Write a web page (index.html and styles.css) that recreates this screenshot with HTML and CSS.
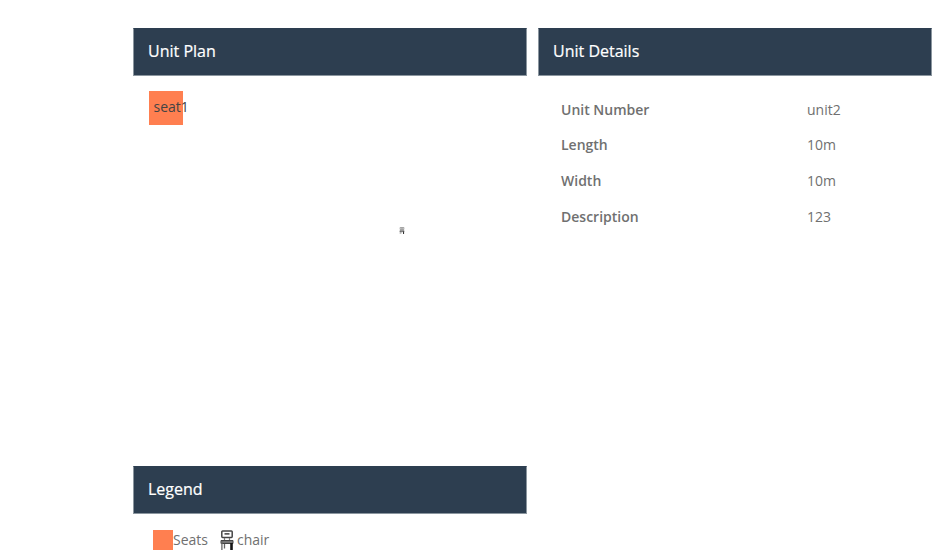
FILE: index.html
```html
<!DOCTYPE html>
<html lang="en">
<head>
<meta charset="utf-8">
<title>Unit Plan</title>
<link rel="stylesheet" href="styles.css">
</head>
<body>
<svg class="defs" width="0" height="0" aria-hidden="true">
  <symbol id="chair" viewBox="0 0 14 20">
    <rect x="1.8" y="1" width="10.4" height="6.4" rx=".8" fill="#fff" stroke="#454545" stroke-width="1.5"/>
    <path d="M4.5 3.9h5" stroke="#222" stroke-width="1.3"/>
    <path d="M4.5 8v3M9.5 8v3" stroke="#777" stroke-width="1.2"/>
    <path d="M1 10.5h12v3H1z" fill="#777" stroke="#444" stroke-width="1"/>
    <path d="M1.9 11v9M4.5 14v4.5" stroke="#666" stroke-width="1.3"/>
    <path d="M11.5 13v7" stroke="#151515" stroke-width="2.6"/>
  </symbol>
</svg>
<main class="page">
  <div class="column">
    <section class="panel plan">
      <h2 class="title">Unit Plan</h2>
      <div class="canvas">
        <div class="seat">seat1</div>
        <svg class="item"><use href="#chair"/></svg>
      </div>
    </section>
    <section class="panel">
      <h2 class="title">Legend</h2>
      <div class="legend">
        <span class="swatch"></span><span class="seats">Seats</span>
        <svg class="chair"><use href="#chair"/></svg><span>chair</span>
      </div>
    </section>
  </div>
  <section class="panel">
    <h2 class="title">Unit Details</h2>
    <dl class="details">
      <dt>Unit Number</dt><dd>unit2</dd>
      <dt>Length</dt><dd>10m</dd>
      <dt>Width</dt><dd>10m</dd>
      <dt>Description</dt><dd>123</dd>
    </dl>
  </section>
</main>
</body>
</html>
```
FILE: styles.css
```css
* { box-sizing: border-box; }
body {
  margin: 0;
  height: 550px;
  overflow: hidden;
  background: #fff;
  color: #707070;
  font: 14px/20px "Open Sans", sans-serif;
}
.defs { position: absolute; }
.page {
  display: grid;
  grid-template-columns: 394px 394px;
  column-gap: 11px;
  padding: 28px 0 0 133px;
}
.plan { height: 438px; }
.title {
  margin: 0;
  height: 48px;
  padding: 0 14px;
  background: #2d3e50;
  border: 1px solid #8b969f;
  border-top-color: #2d3e50;
  color: #fff;
  font-size: 16px;
  font-weight: 400;
  line-height: 44px;
  -webkit-text-stroke: .2px #fff;
}
.canvas { position: relative; height: 390px; }
.seat {
  position: absolute;
  left: 16px;
  top: 15px;
  width: 34px;
  height: 34px;
  padding-left: 4.5px;
  background: #ff7f50;
  color: #444;
  line-height: 32px;
}
.item {
  position: absolute;
  left: 266px;
  top: 151px;
  width: 6px;
  height: 7px;
}
.legend {
  display: flex;
  padding: 16px 0 0 20px;
}
.swatch {
  width: 20px;
  height: 20px;
  background: #ff7f50;
}
.seats { width: 47px; }
.chair { width: 14px; height: 20px; margin-right: 3px; }
.details {
  display: grid;
  grid-template-columns: 246px 1fr;
  grid-auto-rows: 35.7px;
  margin: 0;
  padding: 23.7px 0 0 23px;
}
.details dt { font-weight: 600; }
.details dd { margin: 0; }
```
